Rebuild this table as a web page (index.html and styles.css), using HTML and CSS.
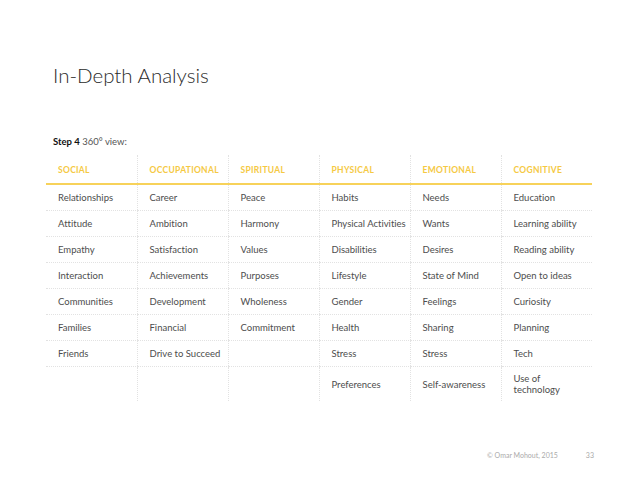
FILE: index.html
```html
<!DOCTYPE html>
<html>
<head>
<meta charset="utf-8">
<link rel="stylesheet" href="styles.css">
</head>
<body>
<div class="slide">
  <h1 class="title">In-Depth Analysis</h1>
  <p class="step"><b>Step 4</b> 360° view:</p>
  <table class="grid">
    <thead>
      <tr><th>SOCIAL</th><th>OCCUPATIONAL</th><th>SPIRITUAL</th><th>PHYSICAL</th><th>EMOTIONAL</th><th>COGNITIVE</th></tr>
    </thead>
    <tbody>
      <tr><td>Relationships</td><td>Career</td><td>Peace</td><td>Habits</td><td>Needs</td><td>Education</td></tr>
      <tr><td>Attitude</td><td>Ambition</td><td>Harmony</td><td>Physical Activities</td><td>Wants</td><td>Learning ability</td></tr>
      <tr><td>Empathy</td><td>Satisfaction</td><td>Values</td><td>Disabilities</td><td>Desires</td><td>Reading ability</td></tr>
      <tr><td>Interaction</td><td>Achievements</td><td>Purposes</td><td>Lifestyle</td><td>State of Mind</td><td>Open to ideas</td></tr>
      <tr><td>Communities</td><td>Development</td><td>Wholeness</td><td>Gender</td><td>Feelings</td><td>Curiosity</td></tr>
      <tr><td>Families</td><td>Financial</td><td>Commitment</td><td>Health</td><td>Sharing</td><td>Planning</td></tr>
      <tr><td>Friends</td><td>Drive to Succeed</td><td></td><td>Stress</td><td>Stress</td><td>Tech</td></tr>
      <tr class="last"><td></td><td></td><td></td><td>Preferences</td><td>Self-awareness</td><td>Use of<br>technology</td></tr>
    </tbody>
  </table>
  <div class="footer"><span>© Omar Mohout, 2015</span><span class="page">33</span></div>
</div>
</body>
</html>
```

FILE: styles.css
```css
html, body {
  margin: 0;
  padding: 0;
  background: #ffffff;
}
body {
  font-family: Lato, "Open Sans", sans-serif;
  font-variant-ligatures: none;
  color: #333;
}
.slide {
  width: 638px;
  height: 479px;
  position: relative;
  box-sizing: border-box;
  padding-top: 61px;
}
.title {
  margin: 0 0 0 53px;
  font-weight: 300;
  font-size: 20.5px;
  line-height: 28px;
  color: #2b2b2b;
}
.step {
  margin: 47px 0 0 53px;
  font-size: 9.5px;
  line-height: 12px;
  color: #555;
}
.step b {
  font-weight: 700;
  color: #111;
}
.grid {
  margin: 7px 0 0 46px;
  width: 546px;
  border-collapse: collapse;
  table-layout: fixed;
}
.grid th, .grid td {
  text-align: left;
  padding: 0 0 0 12px;
  border-left: 1px dotted #e2e2e2;
  vertical-align: middle;
}
.grid th:first-child, .grid td:first-child {
  border-left: none;
}
.grid th {
  height: 26px;
  font-size: 8.5px;
  font-weight: 700;
  letter-spacing: 0.3px;
  color: #f5c943;
  border-bottom: 2px solid #f7d25a;
  padding-top: 2px;
}
.grid td {
  height: 25px;
  font-size: 9.5px;
  font-weight: 400;
  color: #4d4d4d;
  border-bottom: 1px dotted #e2e2e2;
  line-height: 11px;
}
.grid tr.last td {
  border-bottom: none;
  height: 34px;
}
.footer {
  position: absolute;
  left: 487px;
  top: 451px;
  font-size: 7px;
  color: #aaa;
  display: flex;
  gap: 28px;
}
```
